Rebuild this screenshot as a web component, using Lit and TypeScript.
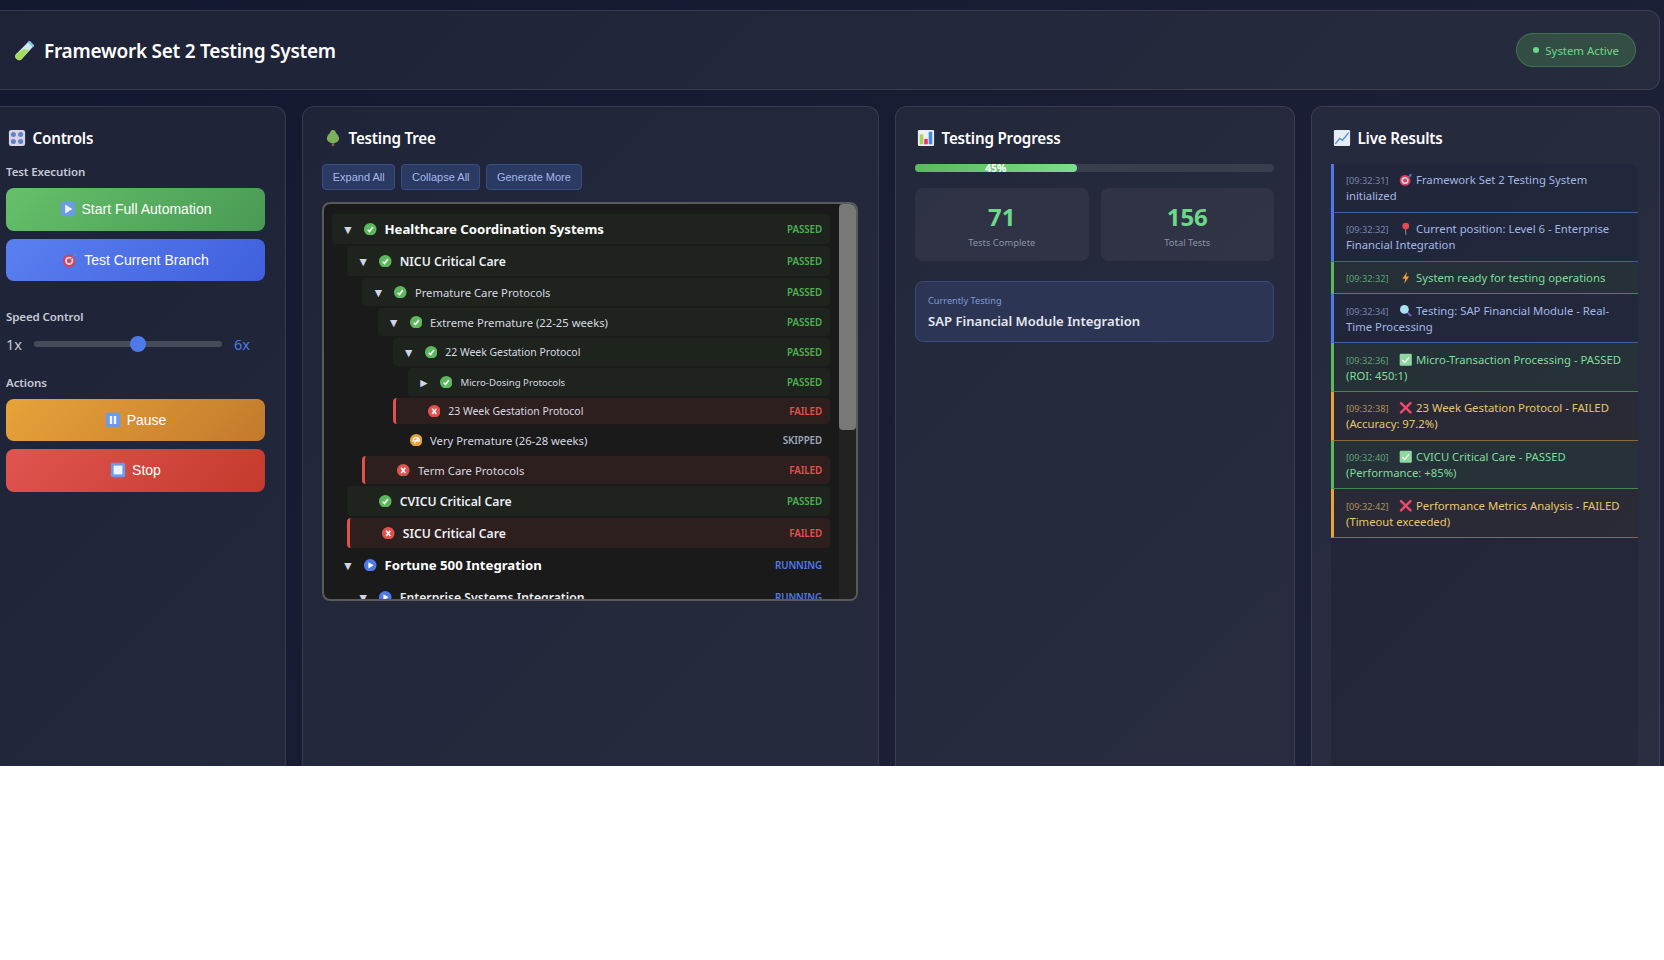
import { LitElement, html, css, svg, nothing } from "lit";
import { customElement } from "lit/decorators.js";

type Status = "passed" | "failed" | "skipped" | "running";

interface TreeNode {
  name: string;
  status: Status;
  level: number;
  height: number;
  collapsed?: boolean;
  children?: TreeNode[];
}

const node = (
  name: string,
  status: Status,
  level: number,
  height: number,
  children?: TreeNode[],
  collapsed = false
): TreeNode => ({ name, status, level, height, children, collapsed });

const TREE: TreeNode[] = [
  node("Healthcare Coordination Systems", "passed", 0, 30, [
    node("NICU Critical Care", "passed", 1, 30, [
      node("Premature Care Protocols", "passed", 2, 28, [
        node("Extreme Premature (22-25 weeks)", "passed", 3, 28, [
          node("22 Week Gestation Protocol", "passed", 4, 28, [
            node("Micro-Dosing Protocols", "passed", 5, 28, [], true),
          ]),
          node("23 Week Gestation Protocol", "failed", 4, 26),
        ]),
        node("Very Premature (26-28 weeks)", "skipped", 3, 28),
      ]),
      node("Term Care Protocols", "failed", 2, 28),
    ]),
    node("CVICU Critical Care", "passed", 1, 30),
    node("SICU Critical Care", "failed", 1, 30),
  ]),
  node("Fortune 500 Integration", "running", 0, 30, [
    node("Enterprise Systems Integration", "running", 1, 30, [
      node("SAP Financial Module Integration", "running", 2, 28),
    ]),
  ]),
];

const statusIcon = (s: Status) => {
  const fill = { passed: "#5cb85c", failed: "#e0524d", skipped: "#e8a33a", running: "#4f79e8" }[s];
  const marks = {
    passed: svg`<path d="M3.6 6.4 5.3 8.2 8.5 3.8" fill="none" stroke="#fff" stroke-width="1.5"/>`,
    failed: svg`<path d="M4 3.6 8 8.6M8 3.6 4 8.6" fill="none" stroke="#fff" stroke-width="1.5"/>`,
    skipped: svg`<path d="M3 6.5a3 3 0 0 1 6 0Z" fill="none" stroke="#fff" stroke-width="1.2"/><path d="M4.2 9 7.8 4" stroke="#fff" stroke-width="1.2"/>`,
    running: svg`<path d="M4.2 3 9.2 6 4.2 9Z" fill="#fff"/>`,
  }[s];
  return html`<svg class="st-icon" viewBox="0 0 12 12"><circle cx="6" cy="6" r="6" fill=${fill} />${marks}</svg>`;
};

const ICONS = {
  tube: svg`<path d="M14 1.5 18.5 6 7.5 18a3.2 3.2 0 0 1-5.2-4.8Z" fill="#cfe6f5"/><path d="M9.3 8.5 14 9.6 7.5 18a3.2 3.2 0 0 1-5.2-4.8Z" fill="#a5dc5a"/><path d="M12.8 1.8 15 .8l4.2 4.2-1 2.2Z" fill="#7fc4ea"/>`,
  knobs: svg`<rect x="1" y="1" width="18" height="18" rx="2.5" fill="#d9d3e6"/><circle cx="6" cy="6" r="2.8" fill="#5f83c8"/><circle cx="14" cy="6" r="2.8" fill="#5f83c8"/><circle cx="6" cy="14" r="2.8" fill="#5f83c8"/><circle cx="14" cy="14" r="2.8" fill="#5f83c8"/>`,
  tree: svg`<rect x="8.6" y="14" width="2.8" height="5" fill="#8a5a44"/><path d="M10 1c2.2 0 3.2 2 3.5 3.6C15.5 6 16.8 8.6 16.8 10.6c0 3-2.8 5-6.8 5s-6.8-2-6.8-5c0-2 1.3-4.6 3.3-6C6.8 3 7.8 1 10 1Z" fill="#7fae5c"/>`,
  chart: svg`<rect x="1" y="1" width="18" height="18" rx="1.5" fill="#eef0f4"/><rect x="3" y="6" width="4" height="11" fill="#a5d65a"/><rect x="8" y="11" width="4" height="6" fill="#e8336b"/><rect x="13" y="3" width="4" height="14" fill="#3f8be0"/>`,
  trend: svg`<rect x="1" y="1" width="18" height="18" rx="1.5" fill="#e6ecf3"/><path d="M2.5 16.5 7.5 10.5 10.5 12.5 17.5 4" fill="none" stroke="#5a8fe0" stroke-width="1.6"/>`,
  play: svg`<rect x="1" y="1" width="18" height="18" rx="2.5" fill="#6b9be8"/><path d="M6.5 4.5 15.5 10 6.5 15.5Z" fill="#f2f5fb"/>`,
  pause: svg`<rect x="1" y="1" width="18" height="18" rx="2.5" fill="#6b9be8"/><rect x="6" y="5" width="3" height="10" fill="#f2f5fb"/><rect x="11" y="5" width="3" height="10" fill="#f2f5fb"/>`,
  stop: svg`<rect x="1" y="1" width="18" height="18" rx="2.5" fill="#6b9be8"/><rect x="4.5" y="4.5" width="11" height="11" fill="#f2f2fb"/>`,
  target: svg`<circle cx="9" cy="11" r="8" fill="#d8405f"/><circle cx="9" cy="11" r="5.2" fill="#e9d8dc"/><circle cx="9" cy="11" r="3" fill="#d8405f"/><path d="M9 11 16 4" stroke="#6a7fa8" stroke-width="1.4"/><path d="M15 2.5 18.5 1 18 5 16 5.5Z" fill="#4f8fe0"/>`,
  pin: svg`<path d="M9.5 9.5 10.3 19" stroke="#9aa0ac" stroke-width="1.3"/><circle cx="10" cy="6" r="5" fill="#e5484d"/>`,
  bolt: svg`<path d="M12 1 5 11.5h4.2L7.8 19 15 8h-4.4Z" fill="#f29a3e"/>`,
  lens: svg`<path d="M12 12 18 18" stroke="#7a5ac8" stroke-width="3"/><circle cx="8" cy="8" r="6.5" fill="#a8e2ef"/>`,
  check: svg`<rect x="1" y="1" width="18" height="18" rx="2" fill="#8fd6a0"/><path d="M5 10.5 8.5 14 15 6.5" fill="none" stroke="#f4fbf5" stroke-width="2"/>`,
  cross: svg`<path d="M3 3 17 17M17 3 3 17" stroke="#f0476b" stroke-width="3.6" stroke-linecap="round"/>`,
};

type IconName = keyof typeof ICONS;

const icon = (name: IconName) => html`<svg class="emoji" viewBox="0 0 20 20">${ICONS[name]}</svg>`;

const LOG: { time: string; icon: IconName; text: string; kind: string }[] = [
  { time: "09:32:31", icon: "target", text: "Framework Set 2 Testing System initialized", kind: "info" },
  { time: "09:32:32", icon: "pin", text: "Current position: Level 6 - Enterprise Financial Integration", kind: "info" },
  { time: "09:32:32", icon: "bolt", text: "System ready for testing operations", kind: "success" },
  { time: "09:32:34", icon: "lens", text: "Testing: SAP Financial Module - Real-Time Processing", kind: "info" },
  { time: "09:32:36", icon: "check", text: "Micro-Transaction Processing - PASSED (ROI: 450:1)", kind: "success" },
  { time: "09:32:38", icon: "cross", text: "23 Week Gestation Protocol - FAILED (Accuracy: 97.2%)", kind: "warning" },
  { time: "09:32:40", icon: "check", text: "CVICU Critical Care - PASSED (Performance: +85%)", kind: "success" },
  { time: "09:32:42", icon: "cross", text: "Performance Metrics Analysis - FAILED (Timeout exceeded)", kind: "warning" },
];

@customElement("app-root")
export class AppRoot extends LitElement {
  static styles = css`
    :host {
      display: block;
      font-family: "Noto Sans", "Open Sans", sans-serif;
      overflow: hidden;
    }

    .page {
      height: 766px;
      width: 1690px;
      box-sizing: border-box;
      overflow: hidden;
      background: linear-gradient(135deg, #121830 0%, #1f2339 100%);
      color: #fff;
      padding: 10px 16px 0 0;
      margin-left: -14px;
    }

    .header {
      display: flex;
      align-items: center;
      justify-content: space-between;
      height: 80px;
      box-sizing: border-box;
      padding: 0 23px 0 27px;
      background: rgba(255, 255, 190, 0.05);
      border: 1px solid rgba(255, 255, 255, 0.1);
      border-radius: 12px;
    }

    .title {
      display: flex;
      align-items: center;
      gap: 9px;
      margin: 0;
      padding-top: 1px;
      font-size: 19px;
      font-weight: 600;
      letter-spacing: -0.25px;
    }

    .title .emoji {
      width: 21px;
      height: 21px;
    }

    .emoji {
      width: 18px;
      height: 18px;
      flex: none;
    }

    .pill {
      display: flex;
      align-items: center;
      gap: 6px;
      height: 34px;
      box-sizing: border-box;
      padding: 0 16px;
      border-radius: 17px;
      background: rgba(92, 184, 92, 0.25);
      border: 1px solid rgba(92, 184, 92, 0.35);
      color: #6ed88a;
      font-size: 11.4px;
    }

    .dot {
      width: 6px;
      height: 6px;
      border-radius: 50%;
      background: #6ed88a;
    }

    .columns {
      display: grid;
      grid-template-columns: 300px 577px 400px 349px;
      gap: 16px;
      margin-top: 16px;
    }

    .panel {
      height: 760px;
      box-sizing: border-box;
      padding: 19px 20px 19px 19px;
      background: rgba(255, 255, 190, 0.05);
      border: 1px solid rgba(255, 255, 255, 0.1);
      border-radius: 12px;
    }

    .panel-title {
      display: flex;
      align-items: center;
      gap: 7px;
      height: 24px;
      margin: 0 0 14px 1.5px;
      font-size: 15.2px;
      font-weight: 600;
      letter-spacing: -0.2px;
    }

    .section-label {
      font-size: 11.5px;
      font-weight: 600;
      color: #c5c9d3;
      line-height: 16px;
      letter-spacing: -0.1px;
    }

    .btn {
      display: flex;
      align-items: center;
      justify-content: center;
      gap: 6px;
      height: 42.5px;
      border-radius: 8px;
      margin-bottom: 8px;
      font-family: "Liberation Sans", sans-serif;
      font-size: 14px;
      color: #fff;
    }

    .btn .emoji {
      width: 16px;
      height: 16px;
    }

    .green {
      background: linear-gradient(135deg, #66c06a, #499a54);
    }
    .blue {
      background: linear-gradient(135deg, #5a80f0, #3f5fdc);
    }
    .orange {
      background: linear-gradient(135deg, #e8a33a, #c27a2c);
    }
    .red {
      background: linear-gradient(135deg, #e05550, #c43a2c);
    }

    .exec-label {
      margin-bottom: 8px;
    }

    .speed-label {
      margin-top: 28px;
    }

    .speed {
      display: flex;
      align-items: center;
      height: 24px;
      margin: 7px 0 19px;
      font-size: 14.5px;
      color: #c5c9d3;
    }

    .speed .lo {
      width: 16px;
    }

    .speed .hi {
      color: #4f79e8;
      margin-left: 12px;
    }

    .track {
      position: relative;
      width: 188px;
      height: 6px;
      margin-left: 12px;
      border-radius: 3px;
      background: #464b5a;
    }

    .thumb {
      position: absolute;
      left: 96px;
      top: -5px;
      width: 16px;
      height: 16px;
      border-radius: 50%;
      background: #4f79e8;
    }

    .actions-label {
      margin-bottom: 7.5px;
    }

    .tools {
      display: flex;
      gap: 6px;
      margin-bottom: 12px;
    }

    .tool {
      height: 26px;
      box-sizing: border-box;
      padding: 0 9.7px;
      display: flex;
      align-items: center;
      background: #2b3a63;
      border: 1px solid #3a4d80;
      border-radius: 4px;
      font-family: "Liberation Sans", sans-serif;
      font-size: 11px;
      color: #a4b8e8;
    }

    .tree-box {
      position: relative;
      height: 399px;
      width: 535.5px;
      box-sizing: border-box;
      background: #1a1a1a;
      border: 2px solid #5a5a5a;
      border-radius: 8px;
      overflow: hidden;
    }

    .tree {
      height: 100%;
      box-sizing: border-box;
      padding: 10px 25.5px 0 8px;
      overflow: hidden;
    }

    .scrollbar {
      position: absolute;
      top: 0;
      right: 0;
      bottom: 0;
      width: 17px;
      background: #222;
    }

    .scrollbar div {
      height: 226px;
      background: #787878;
      border-radius: 4px;
    }

    .row {
      display: flex;
      align-items: center;
      box-sizing: border-box;
      padding: 0 8px;
      margin-bottom: 2px;
      border-radius: 4px;
    }

    .row.passed {
      background: #1f231e;
    }

    .row.failed {
      background: #2e1f1f;
      border-left: 3px solid #e0524d;
    }

    .toggle {
      width: 16px;
      margin-right: 8px;
      text-align: center;
      font-family: "DejaVu Sans", sans-serif;
      font-size: 9.5px;
      color: #cfd5e4;
      flex: none;
    }

    .st-icon {
      width: 12.5px;
      height: 12.5px;
      margin-right: 8px;
      flex: none;
    }

    .name {
      flex: 1;
      white-space: nowrap;
    }

    .l0 .name {
      font-size: 13.2px;
      font-weight: 700;
      color: #fff;
    }
    .l1 .name {
      font-size: 12.2px;
      font-weight: 600;
      color: #eceef3;
    }
    .l2 .name,
    .l3 .name {
      font-size: 11.25px;
      color: #d6d9e0;
    }
    .l4 .name {
      font-size: 10.45px;
      color: #d6d9e0;
    }
    .l5 .name {
      font-size: 9.6px;
      color: #d6d9e0;
    }

    .state {
      font-size: 9.8px;
      font-weight: 600;
      letter-spacing: -0.1px;
    }
    .state.passed {
      color: #4caf50;
    }
    .state.failed {
      color: #e0524d;
    }
    .state.skipped {
      color: #9aa5b8;
    }
    .state.running {
      color: #4f79e8;
    }

    .children {
      margin-left: 15.2px;
    }

    .bar {
      position: relative;
      height: 8px;
      background: #3a3f50;
      border-radius: 4px;
      margin-bottom: 16px;
    }

    .fill {
      height: 100%;
      border-radius: 4px;
      background: linear-gradient(90deg, #5cb85c, #7edd8c);
      display: flex;
      align-items: center;
      justify-content: center;
      font-size: 10.3px;
      font-weight: 700;
      line-height: 8px;
    }

    .stats {
      display: grid;
      grid-template-columns: 1fr 1fr;
      gap: 12px;
      margin-bottom: 20px;
    }

    .stat {
      height: 73px;
      box-sizing: border-box;
      padding-top: 12px;
      text-align: center;
      background: rgba(255, 255, 255, 0.05);
      border-radius: 8px;
    }

    .stat b {
      display: block;
      font-size: 24px;
      font-weight: 700;
      line-height: 34px;
      color: #6ed88a;
    }

    .stat span {
      display: block;
      margin-top: 1px;
      font-size: 9.4px;
      line-height: 16px;
      color: #8a92a5;
    }

    .current {
      height: 61px;
      box-sizing: border-box;
      padding: 11px 12px;
      background: #2c3553;
      border: 1px solid #3a4a7a;
      border-radius: 8px;
    }

    .current small {
      display: block;
      font-size: 9.2px;
      line-height: 16px;
      color: #7e9ad8;
    }

    .current strong {
      display: block;
      margin-top: 1px;
      font-size: 13.1px;
      font-weight: 600;
      line-height: 22px;
      color: #e4e7ef;
    }

    .log {
      height: 700px;
      background: rgba(0, 0, 0, 0.12);
      border-radius: 8px;
      width: 307px;
    }

    .entry {
      padding: 8.4px 12px 7.4px;
      border-left: 3px solid;
      border-bottom: 1px solid;
      font-size: 11.3px;
      line-height: 16px;
    }

    .entry .emoji {
      width: 13.5px;
      height: 13.5px;
      margin: -3px 4px -3px 0;
      vertical-align: 0.5px;
    }

    .time {
      font-size: 9.2px;
      line-height: 1;
      opacity: 0.65;
      margin-right: 10px;
    }

    .info {
      border-left-color: #4f79e8;
      border-bottom-color: #3e5ea8;
      color: #a3b7e4;
      background: rgba(79, 121, 232, 0.03);
    }

    .success {
      border-left-color: #5cb85c;
      border-bottom-color: #47874f;
      color: #7edd9a;
      background: rgba(92, 184, 92, 0.08);
    }

    .warning {
      border-left-color: #e8a33a;
      border-bottom-color: #8a6b3a;
      color: #e6c770;
      background: rgba(232, 163, 58, 0.04);
    }
  `;

  private renderNode(n: TreeNode): unknown {
    const hasKids = (n.children?.length ?? 0) > 0 || n.collapsed;
    return html`
      <div class="row l${n.level} ${n.status}" style="height:${n.height}px">
        <span class="toggle">${hasKids ? (n.collapsed ? "▶" : "▼") : nothing}</span>
        ${statusIcon(n.status)}
        <span class="name">${n.name}</span>
        <span class="state ${n.status}">${n.status.toUpperCase()}</span>
      </div>
      ${n.children?.length
        ? html`<div class="children">${n.children.map((c) => this.renderNode(c))}</div>`
        : nothing}
    `;
  }

  render() {
    return html`
      <div class="page">
        <header class="header">
          <h1 class="title">${icon("tube")}Framework Set 2 Testing System</h1>
          <div class="pill"><span class="dot"></span>System Active</div>
        </header>
        <div class="columns">
          <section class="panel">
            <h2 class="panel-title">${icon("knobs")}Controls</h2>
            <div class="section-label exec-label">Test Execution</div>
            <div class="btn green">${icon("play")}Start Full Automation</div>
            <div class="btn blue">${icon("target")}Test Current Branch</div>
            <div class="section-label speed-label">Speed Control</div>
            <div class="speed">
              <span class="lo">1x</span>
              <div class="track"><div class="thumb"></div></div>
              <span class="hi">6x</span>
            </div>
            <div class="section-label actions-label">Actions</div>
            <div class="btn orange">${icon("pause")}Pause</div>
            <div class="btn red">${icon("stop")}Stop</div>
          </section>

          <section class="panel">
            <h2 class="panel-title">${icon("tree")}Testing Tree</h2>
            <div class="tools">
              <div class="tool">Expand All</div>
              <div class="tool">Collapse All</div>
              <div class="tool">Generate More</div>
            </div>
            <div class="tree-box">
              <div class="tree">${TREE.map((n) => this.renderNode(n))}</div>
              <div class="scrollbar"><div></div></div>
            </div>
          </section>

          <section class="panel">
            <h2 class="panel-title">${icon("chart")}Testing Progress</h2>
            <div class="bar"><div class="fill" style="width:45%">45%</div></div>
            <div class="stats">
              <div class="stat"><b>71</b><span>Tests Complete</span></div>
              <div class="stat"><b>156</b><span>Total Tests</span></div>
            </div>
            <div class="current">
              <small>Currently Testing</small>
              <strong>SAP Financial Module Integration</strong>
            </div>
          </section>

          <section class="panel">
            <h2 class="panel-title">${icon("trend")}Live Results</h2>
            <div class="log">
              ${LOG.map(
                (e) => html`<div class="entry ${e.kind}">
                  <span class="time">[${e.time}]</span>${icon(e.icon)}${e.text}
                </div>`
              )}
            </div>
          </section>
        </div>
      </div>
    `;
  }
}
